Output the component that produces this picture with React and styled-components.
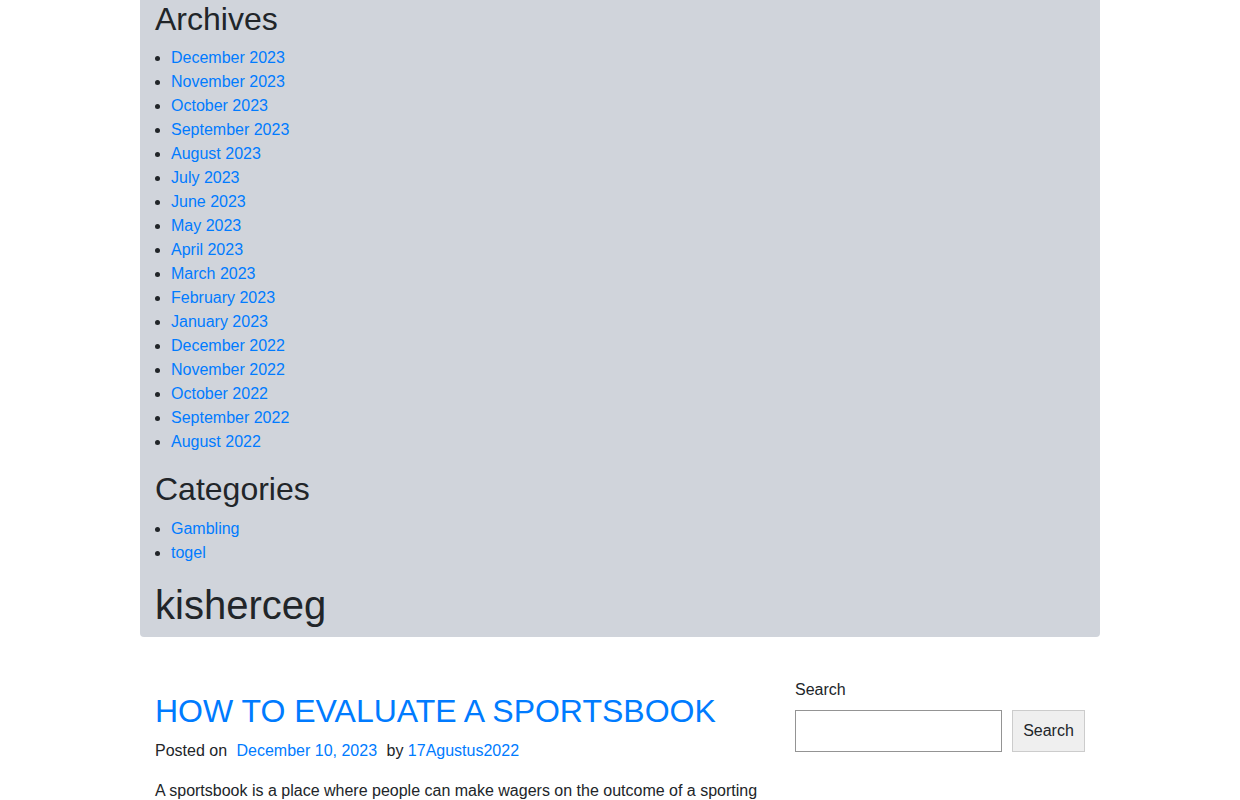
import styled, { createGlobalStyle } from 'styled-components';

const GlobalStyle = createGlobalStyle`
  * { box-sizing: border-box; }
  body {
    margin: 0;
    background: #fff;
    font-family: 'Liberation Sans', Arial, sans-serif;
    font-size: 16px;
    line-height: 1.5;
    color: #212529;
  }
`;

const archives = [
  'December 2023', 'November 2023', 'October 2023', 'September 2023',
  'August 2023', 'July 2023', 'June 2023', 'May 2023', 'April 2023',
  'March 2023', 'February 2023', 'January 2023', 'December 2022',
  'November 2022', 'October 2022', 'September 2022', 'August 2022',
];

const categories = ['Gambling', 'togel'];

const App = () => {
  return (
    <>
      <GlobalStyle />
      <Header>
        <WidgetTitle>Archives</WidgetTitle>
        <LinkList>
          {archives.map((a) => (
            <li key={a}><Link href="#">{a}</Link></li>
          ))}
        </LinkList>

        <WidgetTitle>Categories</WidgetTitle>
        <LinkList>
          {categories.map((c) => (
            <li key={c}><Link href="#">{c}</Link></li>
          ))}
        </LinkList>

        <SiteTitle>kisherceg</SiteTitle>
      </Header>

      <Main>
        <Content>
          <PostTitle><a href="#">HOW TO EVALUATE A SPORTSBOOK</a></PostTitle>
          <PostMeta>
            Posted on <DateLink href="#">December 10, 2023</DateLink> by <Link href="#">17Agustus2022</Link>
          </PostMeta>
          <PostText>
            A sportsbook is a place where people can make wagers on the outcome of a sporting
            event. These bets can be placed on anything from who will win a game to how many
            points will be scored in a matchup.
          </PostText>
        </Content>

        <Sidebar>
          <SearchLabel htmlFor="s">Search</SearchLabel>
          <SearchRow>
            <SearchInput id="s" type="text" />
            <SearchButton type="button">Search</SearchButton>
          </SearchRow>
        </Sidebar>
      </Main>
    </>
  );
};

export default App;

const Header = styled.header`
  width: 960px;
  margin: 0 auto;
  padding: 0 15px;
  background-color: #d0d4db;
  border-radius: 0 0 4px 4px;
  overflow: hidden;
`;

const WidgetTitle = styled.h2`
  margin: 0 0 8px;
  font-size: 32px;
  font-weight: 400;
  line-height: 1.2;
`;

const LinkList = styled.ul`
  margin: 0 0 16px;
  padding-left: 16px;
`;

const Link = styled.a`
  color: #007bff;
  text-decoration: none;
`;

const DateLink = styled(Link)`
  margin: 0 5px;
`;

const SiteTitle = styled.h1`
  margin: 0 0 8px;
  font-size: 40px;
  font-weight: 400;
  line-height: 1.2;
`;

const Main = styled.div`
  width: 960px;
  margin: 40px auto 0;
  display: flex;
`;

const Content = styled.main`
  width: 640px;
  padding: 15px 15px 0;
`;

const PostTitle = styled.h2`
  margin: 0 0 9px;
  font-size: 32px;
  font-weight: 400;
  line-height: 1.2;

  a {
    color: #007bff;
    text-decoration: none;
  }
`;

const PostMeta = styled.div`
  margin-bottom: 16px;
`;

const PostText = styled.p`
  margin: 0;
`;

const Sidebar = styled.aside`
  width: 320px;
  padding: 1px 15px 0;
  display: flex;
  flex-direction: column;
`;

const SearchLabel = styled.label`
  margin-bottom: 8px;
`;

const SearchRow = styled.div`
  display: flex;
  gap: 10px;
`;

const SearchInput = styled.input`
  width: 207px;
  height: 42px;
  border: 1px solid #949494;
  padding: 0 8px;
  font: inherit;
`;

const SearchButton = styled.button`
  width: 73px;
  height: 42px;
  background: #efefef;
  border: 1px solid #ccc;
  font-family: 'Liberation Sans', Arial, sans-serif;
  font-size: 16px;
  color: #212529;
  padding: 0;
`;
